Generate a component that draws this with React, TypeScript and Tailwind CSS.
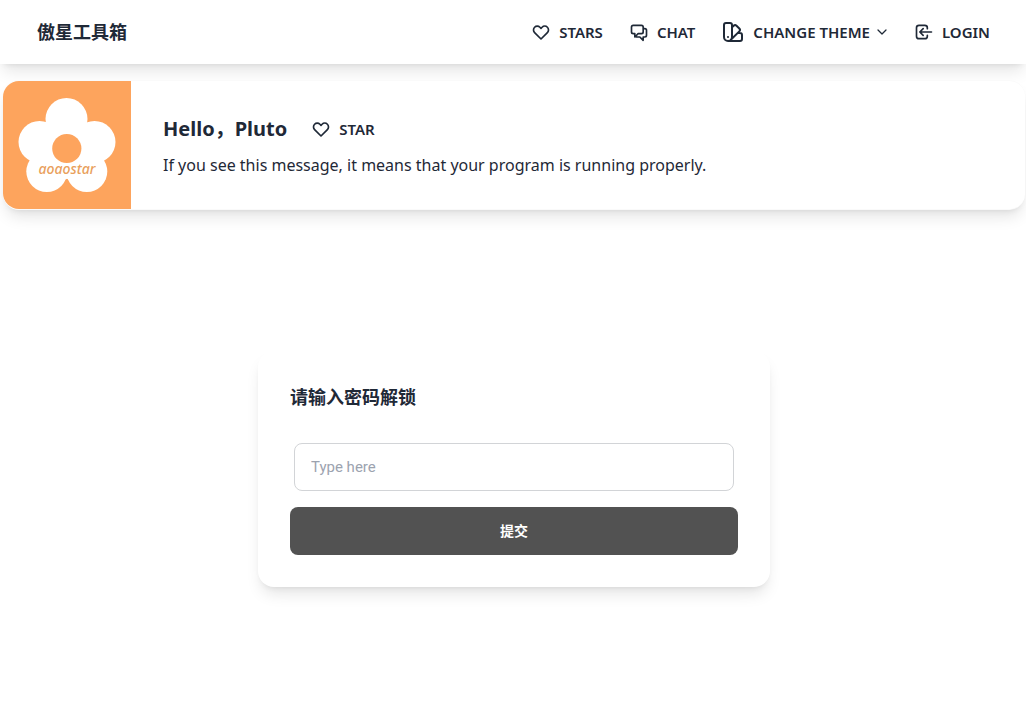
const iconProps = {
  viewBox: "0 0 24 24",
  fill: "none",
  stroke: "currentColor",
  strokeWidth: 2,
  strokeLinecap: "round" as const,
  strokeLinejoin: "round" as const,
  "aria-hidden": true,
};

function HeartIcon() {
  return (
    <svg {...iconProps} className="size-5">
      <path d="M4.318 6.318a4.5 4.5 0 000 6.364L12 20.364l7.682-7.682a4.5 4.5 0 00-6.364-6.364L12 7.636l-1.318-1.318a4.5 4.5 0 00-6.364 0z" />
    </svg>
  );
}

function ChatIcon() {
  return (
    <svg {...iconProps} className="size-5">
      <path d="M17 8h2a2 2 0 012 2v6a2 2 0 01-2 2h-2v4l-4-4H9a1.994 1.994 0 01-1.414-.586m0 0L11 14h4a2 2 0 002-2V6a2 2 0 00-2-2H5a2 2 0 00-2 2v6a2 2 0 002 2h2v4l.586-.586z" />
    </svg>
  );
}

function SwatchIcon() {
  return (
    <svg {...iconProps} className="size-6">
      <path d="M7 21a4 4 0 01-4-4V5a2 2 0 012-2h4a2 2 0 012 2v12a4 4 0 01-4 4zm0 0h12a2 2 0 002-2v-4a2 2 0 00-2-2h-2.343M11 7.343l1.657-1.657a2 2 0 012.828 0l2.829 2.829a2 2 0 010 2.828l-8.486 8.485M7 17h.01" />
    </svg>
  );
}

function LoginIcon() {
  return (
    <svg {...iconProps} className="size-5">
      <path d="M11 16l-4-4m0 0l4-4m-4 4h14m-5 4v1a3 3 0 01-3 3H6a3 3 0 01-3-3V7a3 3 0 013-3h7a3 3 0 013 3v1" />
    </svg>
  );
}

const navItem = "flex h-12 items-center gap-2 text-[15px] font-semibold uppercase";

export default function App() {
  return (
    <div className="min-h-screen bg-white font-['Noto_Sans','Noto_Sans_CJK_SC',sans-serif] text-[#1f2937]">
      <header className="flex h-16 items-center justify-between bg-white pr-9 pl-[37px] shadow-lg">
        <a href="#home" className="text-lg font-bold">傲星工具箱</a>
        <nav className="flex items-center gap-[26px]">
          <a href="#stars" className={navItem}><HeartIcon />Stars</a>
          <a href="#chat" className={navItem}><ChatIcon />Chat</a>
          <button type="button" className={navItem}>
            <SwatchIcon />
            Change Theme
            <svg {...iconProps} strokeWidth={2.5} className="-ml-0.5 size-3"><path d="m4 8 8 8 8-8" /></svg>
          </button>
          <a href="#login" className={navItem}><LoginIcon />Login</a>
        </nav>
      </header>

      <main>
        <section className="mt-4 mr-px ml-[3px] flex rounded-2xl border-y border-[#fafafa] bg-white shadow-lg">
          <svg viewBox="0 0 128 128" className="size-32 shrink-0 rounded-l-2xl" role="img" aria-label="aoaostar">
            <rect width="128" height="128" fill="#fda45d" />
            <g fill="#fff">
              <circle cx="63.5" cy="38" r="21" />
              <circle cx="36.5" cy="61" r="21" />
              <circle cx="91.5" cy="61" r="21" />
              <circle cx="43.8" cy="90.5" r="20.5" />
              <circle cx="83.8" cy="90.5" r="20.5" />
              <circle cx="64" cy="71" r="27" />
            </g>
            <circle cx="63.8" cy="67.5" r="14.6" fill="#fda45d" />
            <text x="64" y="93" textAnchor="middle" fill="#e9a05c" fontSize="14" fontStyle="italic" fontWeight="500" className="font-['Noto_Sans',sans-serif]">aoaostar</text>
          </svg>
          <div className="flex flex-col justify-center gap-2.5 px-8 pt-0.5">
            <div className="flex items-center gap-6">
              <h1 className="text-xl font-bold">Hello，Pluto</h1>
              <a href="#star" className="flex items-center gap-2 text-[15px] font-semibold uppercase"><HeartIcon />Star</a>
            </div>
            <p className="text-base">If you see this message, it means that your program is running properly.</p>
          </div>
        </section>

        <div className="pt-[141px] pl-0.5">
          <form className="mx-auto flex w-full max-w-lg flex-col rounded-2xl bg-white p-8 shadow-lg" onSubmit={(e) => e.preventDefault()}>
            <label htmlFor="password" className="text-lg font-bold">请输入密码解锁</label>
            <input id="password" type="password" placeholder="Type here" className="mx-1 mt-8 h-12 rounded-lg border border-[#d2d4d7] px-4 font-[Roboto,sans-serif] text-[15px] placeholder:text-[#9ca3af]" />
            <button type="submit" className="mt-4 h-12 rounded-lg bg-[#525252] text-sm font-bold text-white">提交</button>
          </form>
        </div>
      </main>
    </div>
  );
}
